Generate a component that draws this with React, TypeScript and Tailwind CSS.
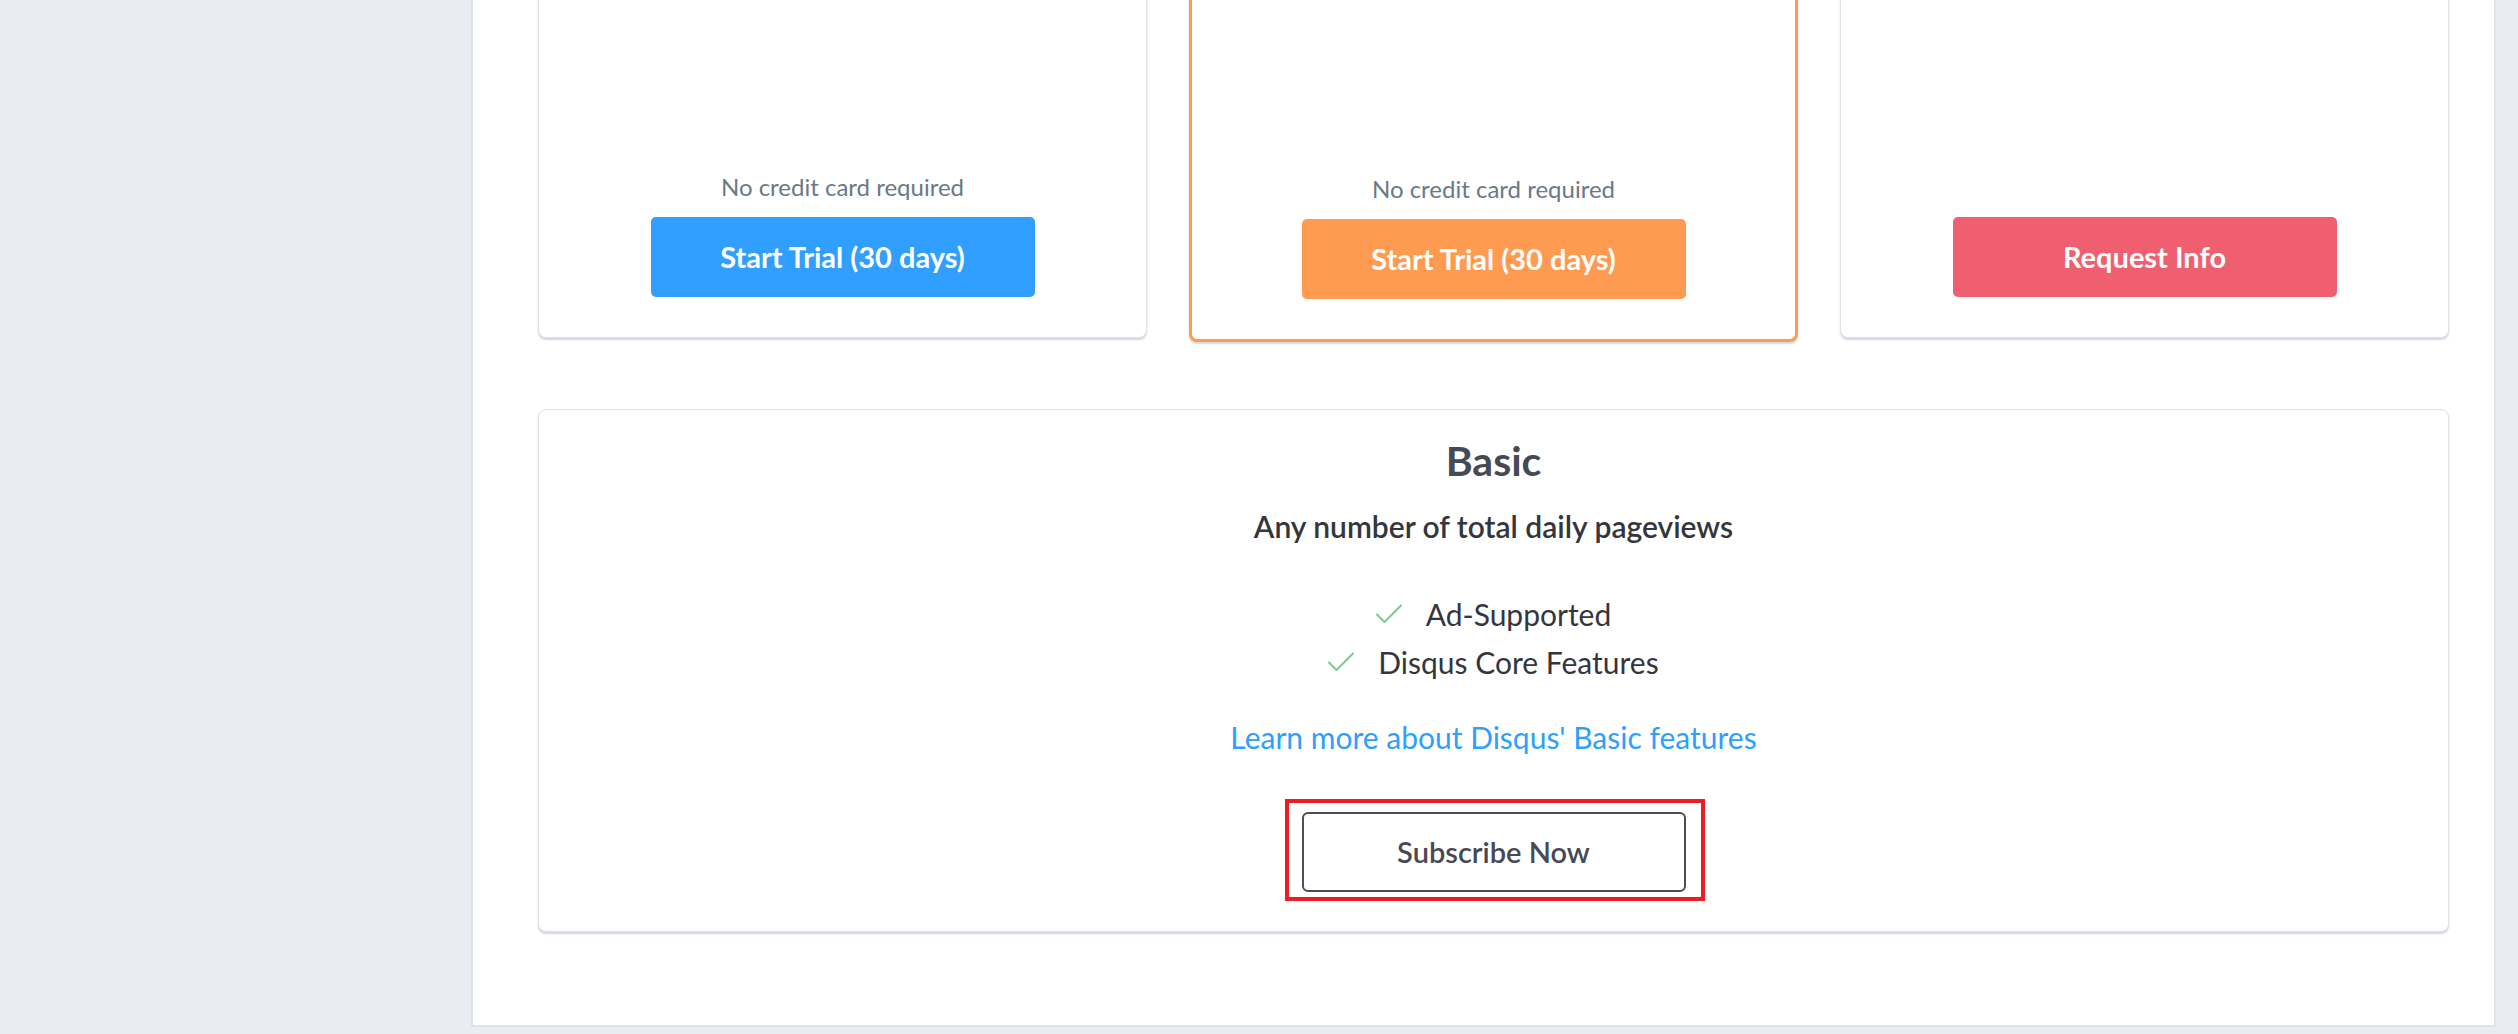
import type { ReactNode } from "react";

interface Plan {
  note?: string;
  label: string;
  button: string;
  highlighted?: boolean;
}

const PLANS: Plan[] = [
  {
    note: "No credit card required",
    label: "Start Trial (30 days)",
    button: "bg-[#309fff]",
  },
  {
    note: "No credit card required",
    label: "Start Trial (30 days)",
    button: "bg-[#ff9b50]",
    highlighted: true,
  },
  {
    label: "Request Info",
    button: "bg-[#ef5f6f]",
  },
];

const FEATURES = ["Ad-Supported", "Disqus Core Features"];

const Check = () => (
  <svg width="26" height="20" viewBox="0 0 26 20" fill="none" className="shrink-0">
    <polyline
      points="1,10.5 8.5,18 25,1.5"
      stroke="#7dcb8c"
      strokeWidth="2"
      strokeLinecap="round"
      strokeLinejoin="round"
    />
  </svg>
);

const Card = ({
  children,
  highlighted = false,
}: {
  children: ReactNode;
  highlighted?: boolean;
}) => (
  <div
    className={
      highlighted
        ? "rounded-[8px] bg-white border-[3px] border-[#ff9b50] shadow-[0_2px_2px_rgba(205,210,222,0.9)]"
        : "rounded-[8px] bg-white border border-[#dfe2e9] shadow-[0_2px_2px_rgba(205,210,222,0.9)]"
    }
  >
    {children}
  </div>
);

const PlanCard = ({ plan }: { plan: Plan }) => (
  <Card highlighted={plan.highlighted}>
    <div className="flex flex-col items-center pb-[40px]">
      <div className="h-[400px]" />
      <p className="h-[30px] leading-[30px] text-[24px] text-[#6b7886]">
        {plan.note ?? ""}
      </p>
      <button
        className={`${plan.button} mt-[15px] w-[384px] h-[80px] rounded-[5px] text-white font-bold text-[29px]`}
      >
        {plan.label}
      </button>
    </div>
  </Card>
);

const App = () => {
  return (
    <div
      className="min-h-screen overflow-hidden bg-[#e9ecf1] flex pb-[7px]"
      style={{ fontFamily: "Lato, 'Noto Sans', sans-serif" }}
    >
      <div className="w-[471px] shrink-0" />
      <main className="flex-1 -mt-[296px] bg-white border-x-2 border-b-2 border-[#dfe2e9] pt-[67px] pl-[65px] pr-[45px] pb-[92px]">
        <div className="grid grid-cols-3 gap-[42px] items-start">
          {PLANS.map((plan, i) => (
            <PlanCard key={i} plan={plan} />
          ))}
        </div>

        <div className="mt-[67px]">
          <Card>
            <div className="flex flex-col items-center pt-[29px] pb-[39px]">
              <h2 className="leading-[44px] text-[41px] font-bold text-[#464a54]">
                Basic
              </h2>
              <p className="mt-[25px] leading-[36px] text-[30px] font-semibold text-[#33363c]">
                Any number of total daily pageviews
              </p>
              <ul className="mt-[46px] flex flex-col items-center">
                {FEATURES.map((f) => (
                  <li
                    key={f}
                    className="flex items-center gap-[24px] leading-[48px] text-[30px] text-[#33363c]"
                  >
                    <Check />
                    {f}
                  </li>
                ))}
              </ul>
              <a
                href="#"
                className="mt-[31px] leading-[40px] text-[30px] text-[#2e9fff]"
              >
                Learn more about Disqus' Basic features
              </a>
              <div className="relative mt-[55px]">
                <button className="w-[384px] h-[80px] rounded-[6px] border-2 border-[#4a4e59] bg-white text-[29px] font-semibold text-[#464a54]">
                  Subscribe Now
                </button>
                <div className="absolute -left-[17px] -top-[13px] w-[420px] h-[102px] border-4 border-[#ee1c25] pointer-events-none" />
              </div>
            </div>
          </Card>
        </div>
      </main>
      <div className="w-[22px] shrink-0" />
    </div>
  );
};

export default App;
